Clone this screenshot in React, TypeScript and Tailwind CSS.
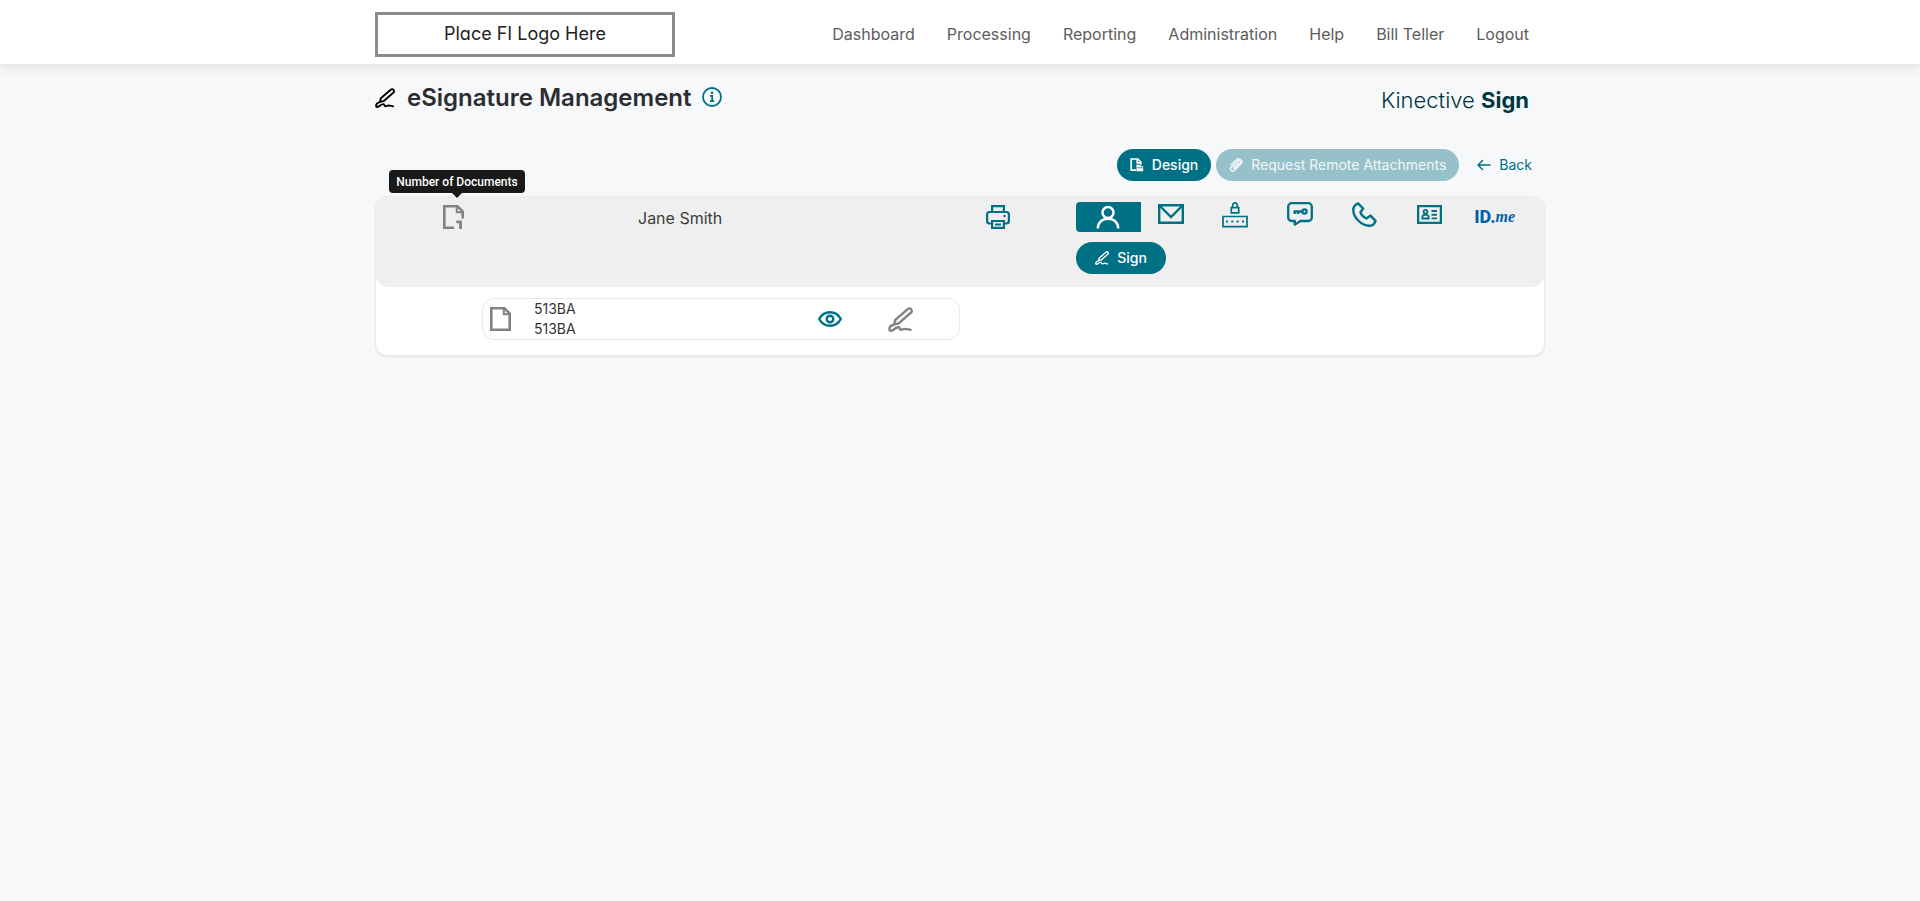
import type { ReactNode } from 'react'

const navLinks = ['Dashboard', 'Processing', 'Reporting', 'Administration', 'Help', 'Bill Teller', 'Logout']

type IconProps = { className?: string }

function SignatureIcon({ className }: IconProps) {
  return (
    <svg viewBox="0 0 24 24" className={className} fill="none" stroke="currentColor" strokeWidth="2.3" strokeLinecap="round" strokeLinejoin="round" aria-hidden="true">
      <path d="M6 16.6 7 12.4 19.2 1.8a1.9 1.9 0 0 1 2.7.2l.5.6a1.9 1.9 0 0 1-.2 2.7L10.2 15.8 6 16.6Z" />
      <path d="M5.6 17C3 17.6 1.2 19.6 1.3 21.8c.2 1.600 2.400 1.100 3.600.2 1.600-1.200 3-2.800 5.400-2.600 1.400.2.6 1.800 1.600 2.400 1.200.5 2.400-.8 4.400-.8 2 0 3.600.8 5.400 1" />
    </svg>
  )
}

function InfoIcon({ className }: IconProps) {
  return (
    <svg viewBox="0 0 20 20" className={className} fill="none" stroke="currentColor" strokeWidth="1.8" aria-hidden="true">
      <circle cx="10" cy="10" r="9" />
      <circle cx="10" cy="5.8" r="1.3" fill="currentColor" stroke="none" />
      <path d="M8 8.8h2.2V14M8 14.2h4.2" />
    </svg>
  )
}

function DocIcon({ className }: IconProps) {
  return (
    <svg viewBox="0 0 21 24" className={className} fill="none" stroke="currentColor" strokeWidth="2.6" aria-hidden="true">
      <path d="M1.3 1.3h13.2L19.7 6.500V22.700H1.300V1.300Z" />
      <path d="M13.800 1v6.200H20" strokeWidth="2" />
    </svg>
  )
}

function DocCountIcon({ className }: IconProps) {
  return (
    <svg viewBox="0 0 21 24" className={className} fill="none" stroke="currentColor" strokeWidth="2.6" aria-hidden="true">
      <path d="M11 22.7H1.3V1.3h13.2L19.7 6.5V13.500" />
      <path d="M13.800 1v6.200H20" strokeWidth="2" />
      <path d="M13.300 16.800h4.200V24" strokeWidth="2.800" />
    </svg>
  )
}

function DesignIcon({ className }: IconProps) {
  return (
    <svg viewBox="0 0 14 14" className={className} fill="none" stroke="currentColor" strokeWidth="1.7" aria-hidden="true">
      <path d="M6 12.2H1.2V1h6.6l3 3V6.6" />
      <path d="M7.2 1v3.8h3.6" />
      <path d="M6.4 6.8h3.8l1 1.4H13.200v5H6.400Z" fill="currentColor" stroke="none" />
      <path d="M6.400 9.800H13.200" stroke="#007085" strokeWidth="0.700" />
    </svg>
  )
}

function ClipIcon({ className }: IconProps) {
  return (
    <svg viewBox="0 0 14 14" className={className} fill="none" stroke="currentColor" strokeWidth="1.4" strokeLinecap="round" aria-hidden="true">
      <path d="M9.5 4.5 5 9.3c-.8 1 .4 2.100 1.300 1.200L11 5.600c1.600-1.800-.8-4.200-2.600-2.600L3.200 8.200" />
      <path d="M3.200 8.200 2 9.300c-1.800 2.200 1.200 5 3.400 3.200l6.400-6.400c2.800-3-1.400-7-4.400-4.400L2 7" />
    </svg>
  )
}

function ArrowIcon({ className }: IconProps) {
  return (
    <svg viewBox="0 0 14 12" className={className} fill="none" stroke="currentColor" strokeWidth="1.5" strokeLinecap="round" strokeLinejoin="round" aria-hidden="true">
      <path d="M13 6H1M5.5 1.5 1 6l4.5 4.5" />
    </svg>
  )
}

function PrinterIcon({ className }: IconProps) {
  return (
    <svg viewBox="0 0 24 24" className={className} fill="none" stroke="currentColor" strokeWidth="2.2" aria-hidden="true">
      <path d="M6.1 7V1.1h11.8V7" />
      <path d="M6 18.5H3.5A2.5 2.5 0 0 1 1.1 16V9.5A2.5 2.5 0 0 1 3.5 7h17a2.5 2.5 0 0 1 2.4 2.5V16a2.5 2.5 0 0 1-2.4 2.5H18" />
      <path d="M6.1 16h11.8v6.900H6.100zM9 19.500h6" />
      <circle cx="18.500" cy="11" r="1.200" fill="currentColor" stroke="none" />
    </svg>
  )
}

function PersonIcon({ className }: IconProps) {
  return (
    <svg viewBox="0 0 24 24" className={className} fill="none" stroke="currentColor" strokeWidth="2.5" aria-hidden="true">
      <circle cx="12" cy="7.5" r="5.5" />
      <path d="M1.8 23.5c0-6 4.2-9.8 10.2-9.8s10.2 3.8 10.2 9.8" />
    </svg>
  )
}

function MailIcon({ className }: IconProps) {
  return (
    <svg viewBox="0 0 26 20" className={className} fill="none" stroke="currentColor" strokeWidth="2.4" aria-hidden="true">
      <path d="M1.2 1.2h23.6v17.6H1.2z" />
      <path d="M2 2l11 11L24 2" />
    </svg>
  )
}

function PasscodeIcon({ className }: IconProps) {
  return (
    <svg viewBox="0 0 26 26" className={className} fill="none" stroke="currentColor" strokeWidth="1.7" aria-hidden="true">
      <path d="M9.3 5.7h7.4v5.2H9.3zM10.7 5.5V3.2a2.3 2.3 0 0 1 4.6 0v2.3" />
      <path d="M1 14.5h24v10.2H1z" />
      <path d="M4 19.6h2M9.3 19.6h2M14.6 19.6h2M20 19.6h2" strokeWidth="2" />
    </svg>
  )
}

function ChatKeyIcon({ className }: IconProps) {
  return (
    <svg viewBox="0 0 26 24" className={className} fill="none" stroke="currentColor" strokeWidth="2.3" strokeLinejoin="round" aria-hidden="true">
      <path d="M4.6 1.2h16.8a3.4 3.4 0 0 1 3.4 3.4v11a3.4 3.4 0 0 1-3.4 3.4H13.5L7.8 22.6V19H4.6a3.4 3.4 0 0 1-3.4-3.4v-11a3.4 3.4 0 0 1 3.4-3.4Z" />
      <circle cx="17.5" cy="9.5" r="2.1" />
      <path d="M15.3 9.5H6.5M7.7 9.5V12M11.2 9.5V12" />
    </svg>
  )
}

function PhoneIcon({ className }: IconProps) {
  return (
    <svg viewBox="0 0 25 25" className={className} fill="none" stroke="currentColor" strokeWidth="2.4" strokeLinejoin="round" aria-hidden="true">
      <path d="M6 1.3 11.2 6.5 8.4 10.2c.9 2.8 3 5 6 6.3l4-2.9 5.200 5.200C22.400 22 19.800 24 17 23.800 9 23.200 1.400 15.500 1.300 8 1.300 5 3.300 2.500 6 1.300Z" />
    </svg>
  )
}

function IdCardIcon({ className }: IconProps) {
  return (
    <svg viewBox="0 0 25 19" className={className} fill="none" stroke="currentColor" strokeWidth="2.3" aria-hidden="true">
      <path d="M1.1 1.1h22.8v16.8H1.1z" />
      <circle cx="8.5" cy="6.8" r="1.9" strokeWidth="1.9" />
      <path d="M5.3 13.5v-1.3c0-1.5 1-2.3 3.2-2.3s3.2.8 3.2 2.3v1.3Z" strokeWidth="1.8" />
      <path d="M14.5 6H20M14.5 9.7H20M14.5 13.4H20" strokeWidth="1.9" />
    </svg>
  )
}

function EyeIcon({ className }: IconProps) {
  return (
    <svg viewBox="0 0 24 16" className={className} fill="none" stroke="currentColor" strokeWidth="2.4" aria-hidden="true">
      <path d="M1.2 8C3.4 3.8 7.3 1.2 12 1.2S20.6 3.8 22.8 8c-2.2 4.2-6.1 6.8-10.8 6.8S3.4 12.2 1.2 8Z" />
      <circle cx="12" cy="8" r="3.3" />
    </svg>
  )
}

const methods: { label: string; icon: ReactNode }[] = [
  { label: 'In person', icon: <PersonIcon className="mt-px h-6 w-6" /> },
  { label: 'Email', icon: <MailIcon className="mt-0.5 h-5 w-[26px]" /> },
  { label: 'Passcode', icon: <PasscodeIcon className="h-[26px] w-[26px]" /> },
  { label: 'Text message', icon: <ChatKeyIcon className="h-6 w-[26px]" /> },
  { label: 'Phone', icon: <PhoneIcon className="h-[25px] w-[25px]" /> },
  { label: 'ID card', icon: <IdCardIcon className="mt-[3px] h-[19px] w-[25px]" /> },
]

function Header() {
  return (
    <header className="bg-white shadow-[0_2px_12px_rgba(0,0,0,0.12)]">
      <div className="mx-auto flex h-16 max-w-[1170px] items-center justify-between pt-1">
        <div className="flex h-[45px] w-[300px] items-center justify-center border-3 border-[#8c8c8c] text-lg text-[#222] [font-feature-settings:'cv11']">
          Place FI Logo Here
        </div>
        <nav className="flex gap-8 pr-4 text-base text-[#5c5c5c]">
          {navLinks.map((link) => (
            <a key={link} href="#">{link}</a>
          ))}
        </nav>
      </div>
    </header>
  )
}

function Signer() {
  return (
    <div className="grid h-[90px] grid-cols-[262fr_348fr_90fr_468fr] rounded-xl bg-[#efefef] text-[#3c3c3c]">
      <div className="pt-2 pl-[67px]">
        <div className="relative w-[21px] text-[#83837e]">
          <DocCountIcon className="h-6 w-[21px]" />
          <div role="tooltip" className="absolute bottom-9 -left-[54px] flex h-[23px] w-[136px] items-center justify-center rounded bg-[#191919] font-['Roboto'] text-xs font-medium text-white">
            Number of Documents
            <span className="absolute top-full left-[63px] border-x-5 border-t-5 border-x-transparent border-t-[#191919]" />
          </div>
        </div>
      </div>
      <div className="pt-[9px] text-base">Jane Smith</div>
      <div className="pt-2">
        <button type="button" aria-label="Print" className="block text-[#007085]">
          <PrinterIcon className="h-6 w-6" />
        </button>
      </div>
      <div className="pt-[5px] pr-[15px]">
        <div className="grid grid-cols-7 text-[#007085]">
          {methods.map(({ label, icon }, i) => (
            <button
              key={label}
              type="button"
              aria-label={label}
              className={i === 0 ? 'flex h-[30px] justify-center rounded-l bg-[#007085] pt-0.5 text-white' : 'flex h-[30px] justify-center pr-[5px]'}
            >
              {icon}
            </button>
          ))}
          <button type="button" aria-label="ID.me" className="flex h-[30px] items-center justify-center pr-1 text-[#0060ac]">
            <span className="font-['Roboto'] text-lg leading-5 font-extrabold">ID.</span>
            <span className="font-['Liberation_Serif'] text-base leading-5 font-bold italic">me</span>
          </button>
        </div>
        <button type="button" className="mt-2.5 flex h-8 w-[90px] items-center justify-center gap-2 rounded-full bg-[#007085] text-sm font-medium text-white">
          <SignatureIcon className="h-3.5 w-3.5" />
          Sign
        </button>
      </div>
    </div>
  )
}

function DocumentRow() {
  return (
    <div className="grid grid-cols-[106fr_478fr_584fr] pt-[11px] pb-[15px]">
      <div className="col-start-2 flex h-[42px] items-center rounded-xl border border-[#e9e9e9] pl-[7px]">
        <DocIcon className="h-6 w-[21px] text-[#83837e]" />
        <div className="ml-[23px] grow text-sm text-[#333]">
          <div>513BA</div>
          <div>513BA</div>
        </div>
        <button type="button" aria-label="View document" className="text-[#007085]">
          <EyeIcon className="h-4 w-6" />
        </button>
        <SignatureIcon className="mx-[46px] h-[25px] w-[25px] text-[#83837e]" />
      </div>
    </div>
  )
}

export default function App() {
  return (
    <div className="min-h-screen bg-[#f7f8fa] font-['Inter',sans-serif]">
      <Header />
      <main className="mx-auto max-w-[1170px]">
        <div className="flex items-center justify-between pt-[18px] pr-4">
          <h1 className="flex items-center text-2xl font-semibold text-[#2b2d33]">
            <SignatureIcon className="mr-3 h-5 w-5 text-black" />
            eSignature Management
            <button type="button" aria-label="About eSignature Management" className="mb-0.5 ml-2.5 text-[#007085]">
              <InfoIcon className="h-5 w-5" />
            </button>
          </h1>
          <div className="pt-1 text-[22px] leading-7 font-light text-[#00363f]">
            Kinective <span className="font-bold">Sign</span>
          </div>
        </div>

        {/* Page actions */}
        <div className="flex items-center justify-end gap-[5px] pt-[35px] pr-[13px] text-sm text-white">
          <button type="button" className="flex h-8 items-center gap-2 rounded-full bg-[#007085] px-[13px] font-medium">
            <DesignIcon className="h-3.5 w-3.5" />
            Design
          </button>
          <button type="button" disabled className="flex h-8 items-center gap-2 rounded-full bg-[#96c1ca] px-[13px] text-[#f0f7f8]">
            <ClipIcon className="h-3.5 w-3.5" />
            Request Remote Attachments
          </button>
          <a href="#" className="ml-[13px] flex items-center gap-2 text-[#007085]">
            <ArrowIcon className="h-3 w-3.5" />
            Back
          </a>
        </div>

        <section className="mt-[15px] rounded-xl border border-[#e9eaec] bg-white shadow-[0_1px_2px_rgba(0,0,0,0.08)]">
          <Signer />
          <DocumentRow />
        </section>
      </main>
    </div>
  )
}
